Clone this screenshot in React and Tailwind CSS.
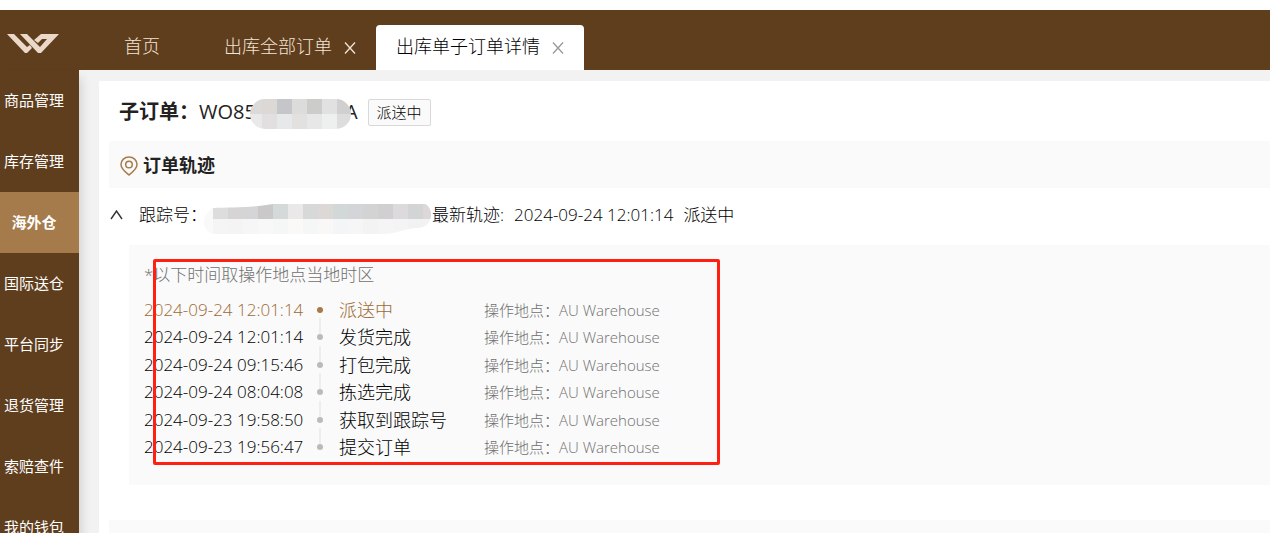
import React, { useState } from "react";

const menuItems = ["商品管理", "库存管理", "海外仓", "国际送仓", "平台同步", "退货管理", "索赔查件", "我的钱包"];

const tabs = [
    { title: "首页", closable: false },
    { title: "出库全部订单", closable: true },
    { title: "出库单子订单详情", closable: true },
];

const tracks = [
    { time: "2024-09-24 12:01:14", status: "派送中" },
    { time: "2024-09-24 12:01:14", status: "发货完成" },
    { time: "2024-09-24 09:15:46", status: "打包完成" },
    { time: "2024-09-24 08:04:08", status: "拣选完成" },
    { time: "2024-09-23 19:58:50", status: "获取到跟踪号" },
    { time: "2024-09-23 19:56:47", status: "提交订单" },
];

const CloseIcon = () => (
    <svg width="12" height="12" viewBox="0 0 12 12" fill="none" stroke="currentColor" strokeWidth="1.3">
        <path d="M1 0.5L11 11.5M11 0.5L1 11.5" />
    </svg>
);

const Logo = () => (
    <svg width="52" height="20" viewBox="0 0 52 20" fill="#ead9c8">
        <path d="M0 0H7L20 13L23 11L25 14L20 19H18Z" />
        <path d="M13 0H20L33 13L40 5H35L31 9L27 6L34 0H52L34 19H31Z" />
    </svg>
);

const PinIcon = () => (
    <svg width="18" height="20" viewBox="0 0 18 20" fill="none" stroke="#a87b4a" strokeWidth="1.5">
        <path d="M9 19C6 16.5 1 13 1 8.5A8 7.6 0 0 1 17 8.5C17 13 12 16.5 9 19Z" />
        <circle cx="9" cy="8.5" r="3.3" />
    </svg>
);

// Pixelated masks over the private numbers
const orderMask = [
    ["#dcdad9", "#dcd8d6", "#c5c6ca", "#dcdddb", "#cccccb", "#e0e2e1", "#d2cfd0"],
    ["#e9e9ea", "#e2dfe0", "#e6e8ea", "#e2e1e0", "#e7e7e7", "#edf0ef", "#dddddd"],
];
const trackingMask = [
    ["#dcdddd", "#f5f5f5"],
    ["#d6d5d4", "#f4f4f4"],
    ["#d5d5d8", "#f6f6f7"],
    ["#cbc9c8", "#f8f8f8"],
    ["#d3dad9", "#f5f6f6"],
    ["#ebe8ea", "#fbf9f8"],
    ["#d6d9d7", "#f4f7f6"],
    ["#dcd8d5", "#f9f8f7"],
    ["#d2d7d8", "#f3f5f7"],
    ["#d3d5d9", "#f6f6f6"],
    ["#d2d4d4", "#f3f3f4"],
    ["#d0d0d1", "#f5f5f5"],
    ["#dcdadc", "#f4f4f4"],
    ["#d3d5d4", "#f2f2f2"],
    ["#ddd8d7", "#f4f3f3"],
];

const OrderMask = () => (
    <svg className="relative -mx-1.5 mt-1 shrink-0" width="101" height="30" viewBox="0 0 101 30">
        <clipPath id="order-mask">
            <rect width="101" height="30" rx="15" />
        </clipPath>
        <g clipPath="url(#order-mask)" shapeRendering="crispEdges">
            {orderMask.map((row, y) =>
                row.map((color, x) => (
                    <rect key={`${x}-${y}`} x={x * 15 - 3} y={y * 15} width="15" height="15" fill={color} />
                ))
            )}
        </g>
    </svg>
);

const TrackingMask = () => (
    <svg className="mt-2 -ml-1 shrink-0" width="229" height="32" viewBox="0 0 229 32">
        <clipPath id="tracking-mask">
            <path d="M10 5C30 4 45 5 70 1H222C231 5 231 24 215 25C200 25 195 31 180 31H12C-2 30 -3 12 10 5Z" />
        </clipPath>
        <g clipPath="url(#tracking-mask)" shapeRendering="crispEdges">
            <rect width="229" height="32" fill="#f9f9f9" />
            {trackingMask.map(([top, bottom], i) => (
                <g key={i}>
                    <rect x={10 + i * 15} y="0" width="15" height="16" fill={top} />
                    <rect x={10 + i * 15} y="16" width="15" height="15" fill={bottom} />
                </g>
            ))}
        </g>
    </svg>
);

const Sidebar = ({ active, onSelect }) => (
    <nav className="relative w-[79px] shrink-0 bg-[#5f3e1e] shadow-[2px_8px_10px_rgba(0,0,0,0.15)]">
        {menuItems.map((item) => (
            <button
                key={item}
                onClick={() => onSelect(item)}
                className={`block h-[61px] w-full pr-[11px] text-center text-[15px] whitespace-nowrap text-white ${
                    item === active ? "bg-[#a67b4b] font-bold" : ""
                }`}
            >
                {item}
            </button>
        ))}
    </nav>
);

const TrackRow = ({ track, first, last }) => (
    <li className={`flex items-center ${first ? "text-[#9a6a35]" : "text-black"}`}>
        <time className="w-[172px] text-[17px] leading-6">{track.time}</time>
        <span className="relative flex w-2 self-stretch items-center justify-center">
            <span className={`size-1.5 rounded-full ${first ? "bg-[#a67b4b]" : "bg-[#bbb]"}`} />
            {!last && <span className="absolute top-[22px] left-[3px] h-4 w-0.5 bg-[#eee]" />}
        </span>
        <span className="ml-[15px] w-[145px] text-[18px] leading-6">{track.status}</span>
        <span className="text-[15px] leading-6 text-[#707070]">操作地点：AU Warehouse</span>
    </li>
);

const App = () => {
    const [activeMenu, setActiveMenu] = useState("海外仓");
    const [activeTab, setActiveTab] = useState(2);
    const [expanded, setExpanded] = useState(true);

    return (
        <div className="flex h-screen flex-col overflow-hidden bg-white pt-2.5 font-['Open_Sans','Noto_Sans_CJK_SC',sans-serif] text-[#222]">
            <header className="flex h-[60px] shrink-0 items-end bg-[#5f3e1e]">
                <div className="flex h-full w-[79px] shrink-0 items-center pt-2 pl-[7px]">
                    <Logo />
                </div>
                <div className="ml-[25px] flex h-[45px]">
                    {tabs.map((tab, i) => (
                        <div
                            key={tab.title}
                            className={`flex items-center gap-3 rounded-t px-5 text-[18px] font-light whitespace-nowrap ${
                                i === activeTab ? "bg-white text-black" : "text-[#f3e4d5]"
                            } ${i === 0 ? "mr-6" : ""}`}
                        >
                            <button className="pb-0.5" onClick={() => setActiveTab(i)}>
                                {tab.title}
                            </button>
                            {tab.closable && (
                                <button aria-label="关闭" className={i === activeTab ? "text-[#999]" : ""}>
                                    <CloseIcon />
                                </button>
                            )}
                        </div>
                    ))}
                </div>
            </header>

            <div className="flex min-h-0 flex-1">
                <Sidebar active={activeMenu} onSelect={setActiveMenu} />
                <main className="min-w-0 flex-1 bg-[#f2f2f2] pt-[11px] pl-5">
                    <div className="h-full bg-white pl-2.5">
                        <div className="flex h-[60px] items-center pt-0.5 pl-2.5 text-[20px]">
                            <h1 className="font-bold">子订单：</h1>
                            <span>WO85</span>
                            <OrderMask />
                            <span>A</span>
                            <span className="ml-2.5 rounded-xs border border-[#d9d9d9] bg-[#fafafa] px-2 text-[15px] leading-[25px] font-light text-black">
                                派送中
                            </span>
                        </div>

                        <h2 className="flex h-[47px] items-center gap-[5px] bg-[#fafafa] pt-0.5 pl-[11px] text-[18px] font-bold">
                            <PinIcon />
                            订单轨迹
                        </h2>

                        <div className="flex h-[57px] items-center pb-1 text-[17px] font-light whitespace-nowrap text-black">
                            <button aria-label="展开" onClick={() => setExpanded(!expanded)} className="w-[30px] pl-px">
                                <svg width="13" height="10" viewBox="0 0 13 10" fill="none" stroke="#333" strokeWidth="1.4">
                                    <path d="M1 9L6.5 1L12 9" />
                                </svg>
                            </button>
                            <span>跟踪号：</span>
                            <TrackingMask />
                            <span>最新轨迹:</span>
                            <time className="ml-2.5">2024-09-24 12:01:14</time>
                            <span className="ml-2.5">派送中</span>
                        </div>

                        {expanded && (
                            <section className="relative ml-5 h-60 bg-[#fafafa] pt-4 pl-[15px] font-light">
                                <p className="text-[17px] leading-7 text-[#707070]">*以下时间取操作地点当地时区</p>
                                <ol className="mt-[7px] grid h-[165px] grid-rows-6">
                                    {tracks.map((track, i) => (
                                        <TrackRow key={i} track={track} first={i === 0} last={i === tracks.length - 1} />
                                    ))}
                                </ol>
                                <div className="pointer-events-none absolute top-3.5 left-6 h-[206px] w-[567px] rounded-xs border-3 border-[#ff2012]" />
                            </section>
                        )}

                        <div className="mt-[35px] h-12 bg-[#fafafa]" />
                    </div>
                </main>
            </div>
        </div>
    );
};

export default App;
